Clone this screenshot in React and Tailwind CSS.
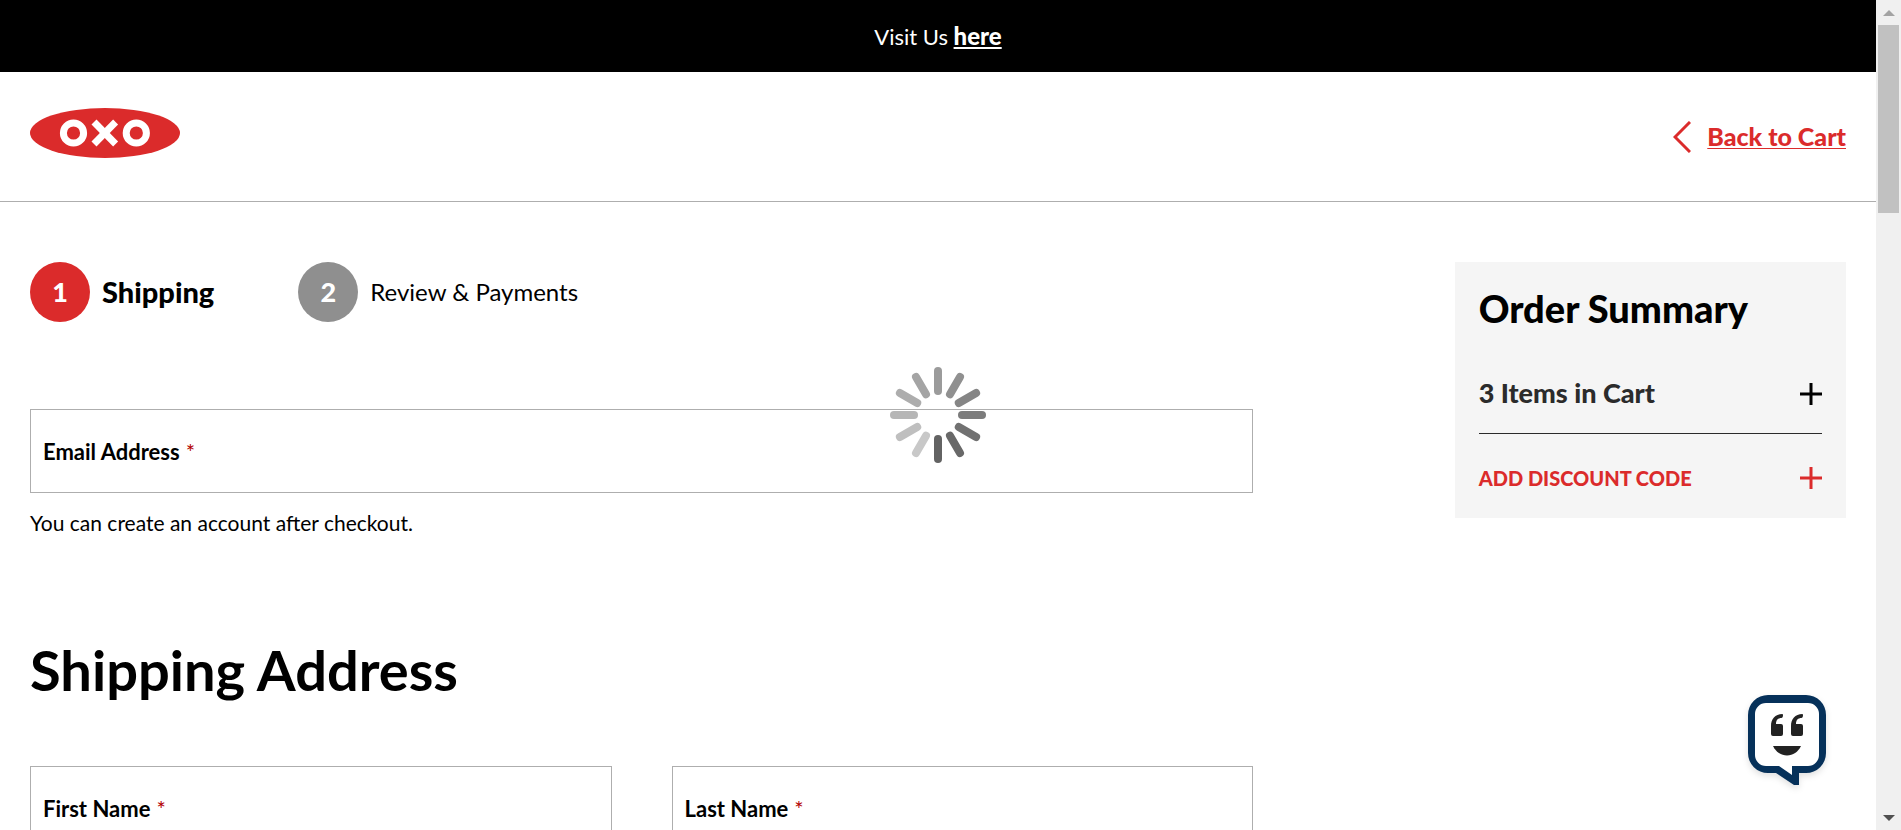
import React from "react";

function Logo() {
  return (
    <svg viewBox="0 0 150 50" className="h-[50px] w-[150px]" role="img" aria-label="OXO">
      <ellipse cx="75" cy="25" rx="75" ry="25" fill="#db2b2b" />
      <g fill="none" stroke="#fff" strokeWidth="7">
        <circle cx="43.5" cy="25" r="10.1" />
        <circle cx="106.3" cy="25" r="10.1" />
        <line x1="64" y1="14" x2="85.600" y2="36" />
        <line x1="85.600" y1="14" x2="64" y2="36" />
      </g>
    </svg>
  );
}

function Plus() {
  return (
    <svg viewBox="0 0 22 22" className="h-[22px] w-[22px]" aria-hidden="true">
      <path d="M11 0v22M0 11h22" stroke="currentColor" strokeWidth="3" />
    </svg>
  );
}

const spokes = [
  "#9b9b9b", "#909090", "#858585", "#7c7c7c", "#717171", "#686868",
  "#636363", "#c8c8c8", "#bfbfbf", "#b6b6b6", "#adadad", "#a4a4a4",
];

function Spinner() {
  return (
    <svg viewBox="0 0 96 96" className="h-24 w-24" role="img" aria-label="Loading">
      {spokes.map((color, i) => (
        <line
          key={color}
          x1="48" y1="4" x2="48" y2="24"
          stroke={color}
          strokeWidth="8"
          strokeLinecap="round"
          transform={`rotate(${i * 30} 48 48)`}
        />
      ))}
    </svg>
  );
}

function ChatIcon() {
  return (
    <svg viewBox="0 0 78 91" className="h-[91px] w-[78px] drop-shadow-md" aria-hidden="true">
      <path
        d="M20 0H58A20 20 0 0 1 78 20V58A20 20 0 0 1 58 78H51V90H46L28 78H20A20 20 0 0 1 0 58V20A20 20 0 0 1 20 0Z"
        fill="#06315a"
      />
      <path
        d="M18 8H60A11 11 0 0 1 71 19V60A11 11 0 0 1 60 71H44V80L31 71H18A11 11 0 0 1 7 60V19A11 11 0 0 1 18 8Z"
        fill="#fff"
      />
      <path d="M34.500 19C27 19 23 24 23 31V39Q23 41 25 41H33Q35 41 35 39V31Q35 29 33 29H28C28 25 30 23 33.500 23Q35 22.500 35 20.500Q35 19 34.500 19Z" fill="#222" />
      <path d="M54.500 19C47 19 43 24 43 31V39Q43 41 45 41H53Q55 41 55 39V31Q55 29 53 29H48C48 25 50 23 53.500 23Q55 22.500 55 20.500Q55 19 54.500 19Z" fill="#222" />
      <path d="M25 51H53C50 57 45 60.500 39 60.500S28 57 25 51Z" fill="#222" />
    </svg>
  );
}

function Field({ id, label, type = "text" }) {
  return (
    <div className="relative">
      <input
        id={id}
        type={type}
        required
        className="block h-[84px] w-full border border-[#aeaeae] bg-transparent px-3 pt-5 text-xl outline-none"
      />
      <label htmlFor={id} className="absolute inset-y-0 left-[13px] flex items-center gap-[6px] text-[22px] font-bold">
        {label}
        <span className="font-normal text-[#b30000]">*</span>
      </label>
    </div>
  );
}

function Step({ number, label, active }) {
  return (
    <li className="flex items-center gap-3">
      <span className={`flex h-[60px] w-[60px] items-center justify-center rounded-full text-[27px] font-black text-white ${active ? "bg-[#db2b2b]" : "bg-[#8f8f8f]"}`}>
        {number}
      </span>
      <span className={active ? "text-[29px] font-black" : "text-2xl"}>{label}</span>
    </li>
  );
}

function ScrollBar() {
  return (
    <div className="flex w-[25px] shrink-0 flex-col items-center justify-between bg-[#f0f0f0]" aria-hidden="true">
      <div className="flex w-full flex-col items-center">
        <div className="flex h-[25px] items-center">
          <svg viewBox="0 0 12 6" className="h-[6px] w-3"><path d="M0 6L6 0L12 6Z" fill="#a3a3a3" /></svg>
        </div>
        <div className="h-[188px] w-[21px] bg-[#c1c1c1]" />
      </div>
      <div className="flex h-[25px] items-center">
        <svg viewBox="0 0 12 6" className="h-[6px] w-3"><path d="M0 0H12L6 6Z" fill="#505050" /></svg>
      </div>
    </div>
  );
}

export default function App() {
  return (
    <div className="relative flex h-screen overflow-hidden bg-white font-['Lato',sans-serif] text-black">
      <div className="relative min-w-0 flex-1 overflow-hidden">
        <div className="flex h-[72px] items-center justify-center bg-black text-white">
          <p className="text-[22px]">
            Visit Us <a href="#visit" className="text-2xl font-black underline decoration-2 underline-offset-2">here</a>
          </p>
        </div>

        <header className="flex h-[130px] items-center justify-between border-b border-[#aeaeae] px-[30px]">
          <a href="#home" className="pb-2"><Logo /></a>
          <a href="#cart" className="flex items-center gap-4 text-[25px] font-black text-[#db2b2b]">
            <svg viewBox="0 0 18 32" className="h-8 w-[18px]" fill="none" aria-hidden="true">
              <path d="M17 1L2 16L17 31" stroke="currentColor" strokeWidth="3" />
            </svg>
            <span className="underline decoration-1 underline-offset-2">Back to Cart</span>
          </a>
        </header>

        <div className="flex items-start justify-between px-[30px] pt-[60px]">
          <main className="w-[67.35%]">
            <ol className="flex gap-[84px]">
              <Step number="1" label="Shipping" active />
              <Step number="2" label="Review & Payments" />
            </ol>

            <form>
              <div className="mt-[87px]">
                <Field id="email" label="Email Address" type="email" />
                <p className="mt-[14px] text-[21px] leading-8">You can create an account after checkout.</p>
              </div>

              <h1 className="mt-[93px] text-[56px] leading-[76px] font-bold">Shipping Address</h1>

              <div className="mt-[58px] grid grid-cols-2 gap-[60px]">
                <Field id="first-name" label="First Name" />
                <Field id="last-name" label="Last Name" />
              </div>
            </form>
          </main>

          <aside className="w-[21.55%] bg-[#f5f5f5] px-6 pb-3">
            <h2 className="pt-6 text-[38px] leading-[44px] font-black">Order Summary</h2>
            <button type="button" className="mt-6 flex h-20 w-full items-center justify-between border-b border-[#2b2b2b] text-[27px] font-black text-[#2b2b2b]">
              3 Items in Cart
              <span className="text-black"><Plus /></span>
            </button>
            <button type="button" className="mt-4 flex h-14 w-full items-center justify-between text-xl font-black text-[#db2b2b]">
              ADD DISCOUNT CODE
              <Plus />
            </button>
          </aside>
        </div>

        <div className="pointer-events-none absolute inset-0 flex items-center justify-center">
          <Spinner />
        </div>
        <button type="button" aria-label="Open chat" className="absolute right-[50px] bottom-11">
          <ChatIcon />
        </button>
      </div>
      <ScrollBar />
    </div>
  );
}
